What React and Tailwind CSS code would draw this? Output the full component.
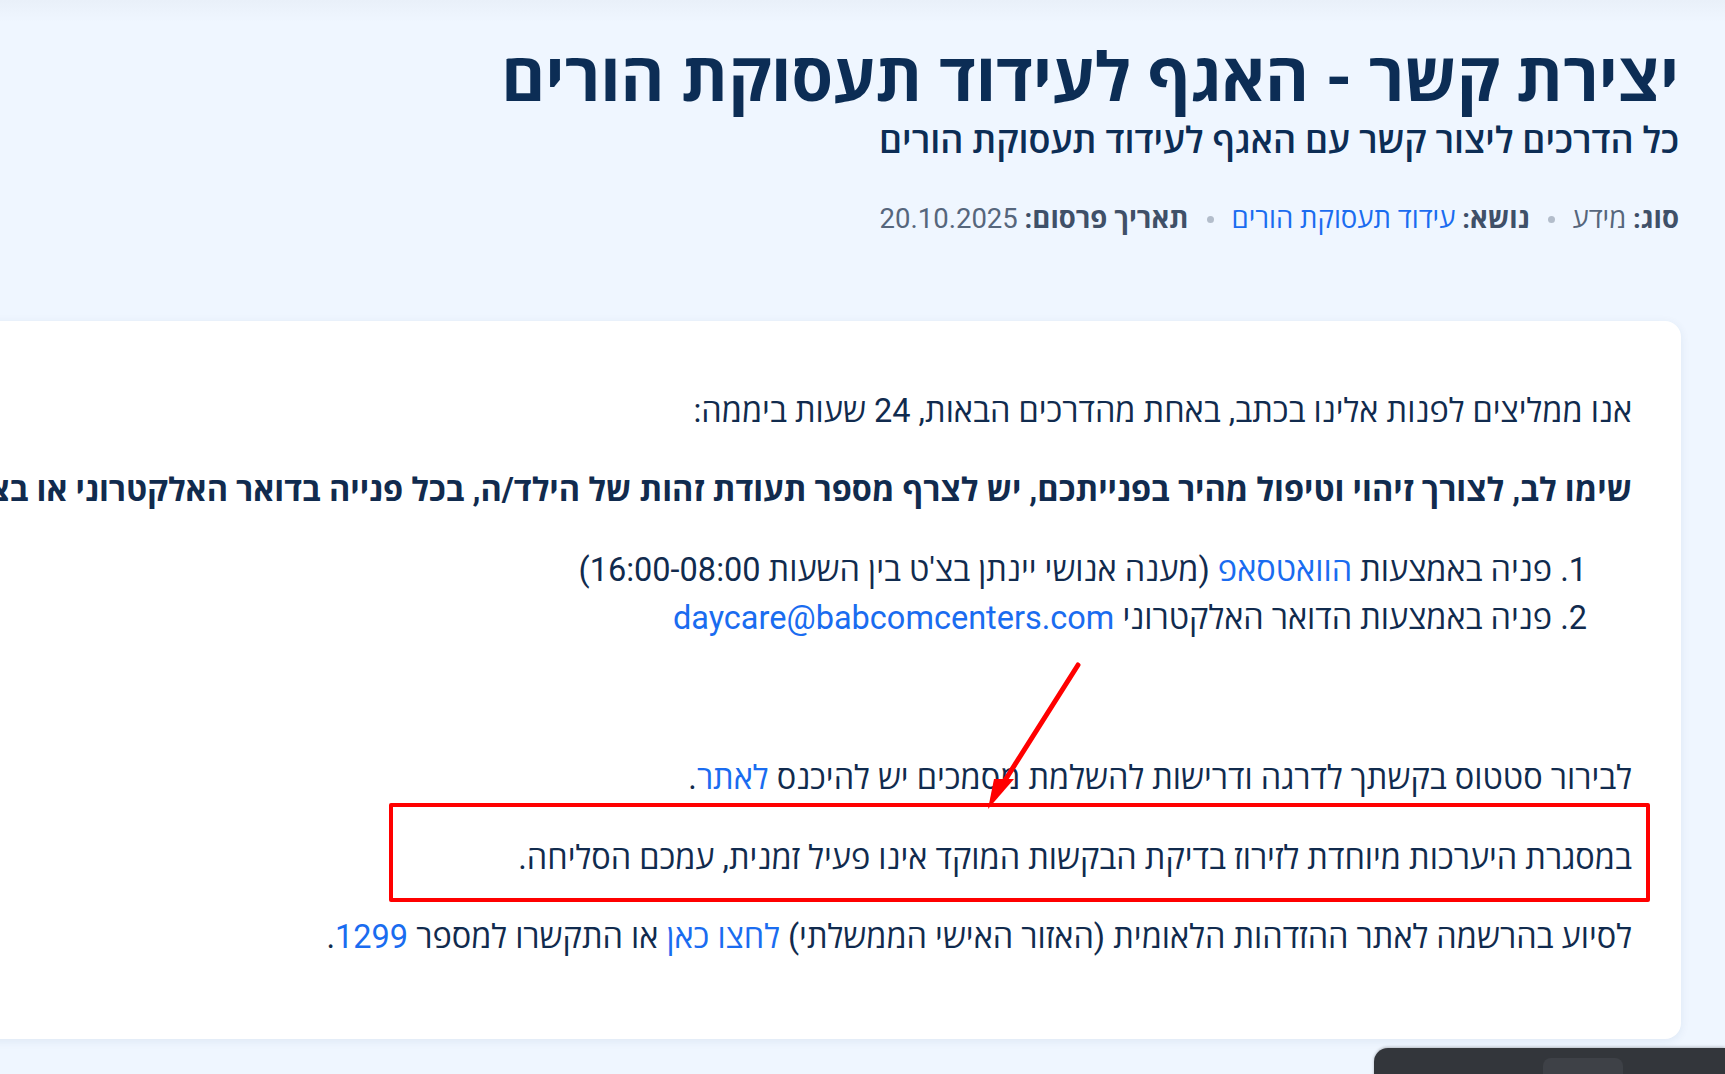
import React from "react";

const FONT = { fontFamily: '"Roboto", "Open Sans", "Liberation Sans", sans-serif' };

function Meta() {
  return (
    <div className="mt-[39px] flex items-center gap-[18px] text-[27.5px] leading-[34px] text-[#56667c]">
      <span>
        <b className="font-bold text-[#3f5068]">סוג:</b> מידע
      </span>
      <span className="w-[7px] h-[7px] rounded-full bg-[#b3bdcb]" />
      <span>
        <b className="font-bold text-[#3f5068]">נושא:</b>{" "}
        <a className="text-[#1a6cf0]">עידוד תעסוקת הורים</a>
      </span>
      <span className="w-[7px] h-[7px] rounded-full bg-[#b3bdcb]" />
      <span>
        <b className="font-bold text-[#3f5068]">תאריך פרסום:</b> 20.10.2025
      </span>
    </div>
  );
}

export default function App() {
  return (
    <div
      dir="rtl"
      style={FONT}
      className="relative min-h-screen w-full overflow-hidden bg-[#eff6ff] text-[#112b4e]"
    >
      <div className="absolute inset-x-0 top-0 h-[22px] bg-gradient-to-b from-[#e9f0f9] to-[#eff6ff]" />

      <header className="relative pr-[46px] pt-[41px]">
        <h1 className="text-[67px] leading-[74px] font-bold text-[#0c2d55] whitespace-nowrap">
          יצירת קשר - האגף לעידוד תעסוקת הורים
        </h1>
        <p className="mt-[5px] text-[36px] leading-[43px] font-semibold text-[#0c2d55]">
          כל הדרכים ליצור קשר עם האגף לעידוד תעסוקת הורים
        </p>
        <Meta />
      </header>

      <main className="mt-[85px] mr-[44px] w-[2800px] rounded-[16px] bg-white shadow-[0_2px_10px_rgba(30,60,110,0.08)] pt-[66px] pb-[78px] pr-[49px] text-[32.5px] leading-[48px] whitespace-nowrap">
        <p>אנו ממליצים לפנות אלינו בכתב, באחת מהדרכים הבאות, 24 שעות ביממה:</p>
        <p className="mt-[31px] font-bold">
          שימו לב, לצורך זיהוי וטיפול מהיר בפנייתכם, יש לצרף מספר תעודת זהות של הילד/ה, בכל פנייה בדואר האלקטרוני או בצ'אט הוואטסאפ.
        </p>
        <div className="mt-[32px] pr-[45px]">
          <div>
            1. פניה באמצעות <a className="text-[#1a6cf0]">הוואטסאפ</a> (מענה אנושי יינתן בצ'ט בין השעות 16:00-08:00)
          </div>
          <div>
            2. פניה באמצעות הדואר האלקטרוני{" "}
            <a className="text-[#1a6cf0]">daycare@babcomcenters.com</a>
          </div>
        </div>
        <p className="mt-[32px]">&nbsp;</p>
        <p className="mt-[32px]">
          לבירור סטטוס בקשתך לדרגה ודרישות להשלמת מסמכים יש להיכנס <a className="text-[#1a6cf0]">לאתר</a>.
        </p>
        <div className="relative mt-[32px]">
          <p>במסגרת היערכות מיוחדת לזירוז בדיקת הבקשות המוקד אינו פעיל זמנית, עמכם הסליחה.</p>
          <div className="absolute right-[-18px] top-[-31px] h-[99px] w-[1261px] border-[4px] border-[#ff0000] rounded-[2px]" />
          <svg
            className="absolute right-[546px] top-[-171px] overflow-visible"
            width="100"
            height="150"
            viewBox="0 0 100 150"
          >
            <line x1="92" y1="2" x2="16" y2="122" stroke="#ff0000" strokeWidth="5" strokeLinecap="round" />
            <polygon points="2,146 8,116 28,116" fill="#ff0000" />
          </svg>
        </div>
        <p className="mt-[31px]">
          לסיוע בהרשמה לאתר ההזדהות הלאומית (האזור האישי הממשלתי) <a className="text-[#1a6cf0]">לחצו כאן</a> או התקשרו למספר{" "}
          <a className="text-[#1a6cf0]">1299</a>.
        </p>
      </main>

      <div className="absolute right-0 bottom-[-40px] h-[66px] w-[351px] rounded-tl-[14px] bg-[#33363b] shadow-[0_-1px_3px_rgba(0,0,0,0.25)]">
        <div className="absolute right-[102px] top-[10px] h-[40px] w-[80px] rounded-[8px] bg-[#3e4147]" />
      </div>
    </div>
  );
}
